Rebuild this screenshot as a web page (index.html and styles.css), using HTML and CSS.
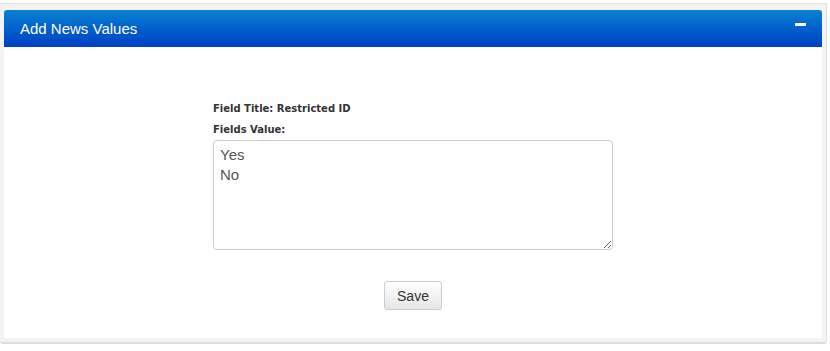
FILE: index.html
```html
<!DOCTYPE html>
<html lang="en">
<head>
  <meta charset="UTF-8">
  <title>Add News Values</title>
  <link rel="stylesheet" href="styles.css">
</head>
<body>
  <div class="page">
    <div class="panel">
      <div class="panel-heading">
        <h3 class="panel-title">Add News Values</h3>
        <span class="collapse-icon"></span>
      </div>
      <div class="panel-body">
        <form class="value-form">
          <label class="field-label">Field Title: Restricted ID</label>
          <label class="field-label label-tight">Fields Value:</label>
          <textarea class="field-value">Yes
No</textarea>
          <div class="form-actions">
            <button type="button" class="save-button">Save</button>
          </div>
        </form>
      </div>
    </div>
  </div>
</body>
</html>
```

FILE: styles.css
```css
body {
  margin: 0;
  padding: 0;
  background: #fff;
  font-family: "Liberation Sans", Arial, sans-serif;
}

.page {
  width: 827px;
  padding-top: 3px;
}

.panel {
  background: #f3f3f3;
  border-top: 1px solid #e2e2e2;
  border-right: 1px solid #e2e2e2;
  border-bottom: 2px solid #dcdcdc;
  padding: 6px 4px 4px 4px;
  border-radius: 0 0 3px 3px;
}

.panel-heading {
  display: flex;
  align-items: center;
  justify-content: space-between;
  height: 37px;
  padding: 0 16px 0 16px;
  background: linear-gradient(to bottom, #0a82d0 0%, #0060cc 50%, #0040c4 100%);
  border-radius: 3px 3px 0 0;
}

.panel-title {
  margin: 0;
  color: #fff;
  font-size: 15px;
  font-weight: normal;
}

.collapse-icon {
  width: 11px;
  height: 3px;
  background: #fff;
  margin-bottom: 8px;
}

.panel-body {
  background: #fff;
  height: 291px;
  display: flex;
  justify-content: center;
}

.value-form {
  width: 400px;
  padding-top: 56px;
  display: flex;
  flex-direction: column;
}

.field-label {
  font-family: "DejaVu Sans", Verdana, sans-serif;
  font-size: 10px;
  line-height: 12px;
  font-weight: bold;
  color: #333;
  margin-bottom: 9px;
}

.label-tight {
  margin-bottom: 4px;
}

.field-value {
  box-sizing: border-box;
  width: 400px;
  height: 110px;
  margin: 0;
  padding: 4px 6px;
  border: 1px solid #ccc;
  border-radius: 4px;
  font-family: "Liberation Sans", Arial, sans-serif;
  font-size: 15px;
  line-height: 20px;
  color: #555;
  resize: vertical;
}

.form-actions {
  display: flex;
  justify-content: center;
  padding-top: 31px;
}

.save-button {
  width: 58px;
  height: 29px;
  padding: 0;
  font-family: "Liberation Sans", Arial, sans-serif;
  font-size: 14px;
  color: #333;
  background: linear-gradient(to bottom, #fff 0%, #e6e6e6 100%);
  border: 1px solid #ccc;
  border-radius: 3px;
  cursor: pointer;
}
```
